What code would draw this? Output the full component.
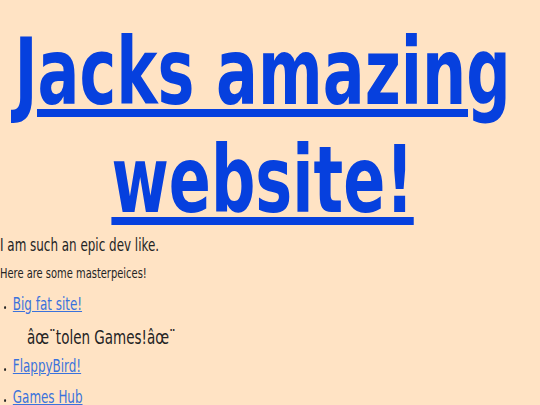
import React from 'react';

const App: React.FC = () => {
  return (
    <div className="min-h-screen w-full overflow-hidden bg-[#ffe3c4]">
      {/* page is drawn at 800px and squeezed sideways, like the screenshot */}
      <div className="w-[800px] origin-top-left scale-x-[0.675] font-['DejaVu_Sans',sans-serif] leading-[normal] text-[#242424]">
        <h1 className="pt-[19px] pr-[22px] text-center text-[92px] font-bold leading-[108px]">
          <a
            href="#"
            className="text-[#0640de] underline decoration-[8px] underline-offset-[5px]"
          >
            Jacks amazing website!
          </a>
        </h1>

        <p className="text-[17.7px]">I am such an epic dev like.</p>
        <p className="mt-[9px] text-[14.7px]">Here are some masterpeices!</p>

        <ul className="mt-[13px] list-disc pl-[19px] text-[17.7px] marker:text-[11px]">
          <li>
            <a href="#" className="text-[#3a72dc] underline">
              Big fat site!
            </a>
          </li>
          <p className="mt-[11px] ml-[21px] text-[20px]">âœ¨tolen Games!âœ¨</p>
          <li className="mt-[7px]">
            <a href="#" className="text-[#3a72dc] underline">
              FlappyBird!
            </a>
          </li>
          <li className="mt-[11px]">
            <a href="#" className="text-[#3a72dc] underline">
              Games Hub
            </a>
          </li>
        </ul>
      </div>
    </div>
  );
};

export default App;
